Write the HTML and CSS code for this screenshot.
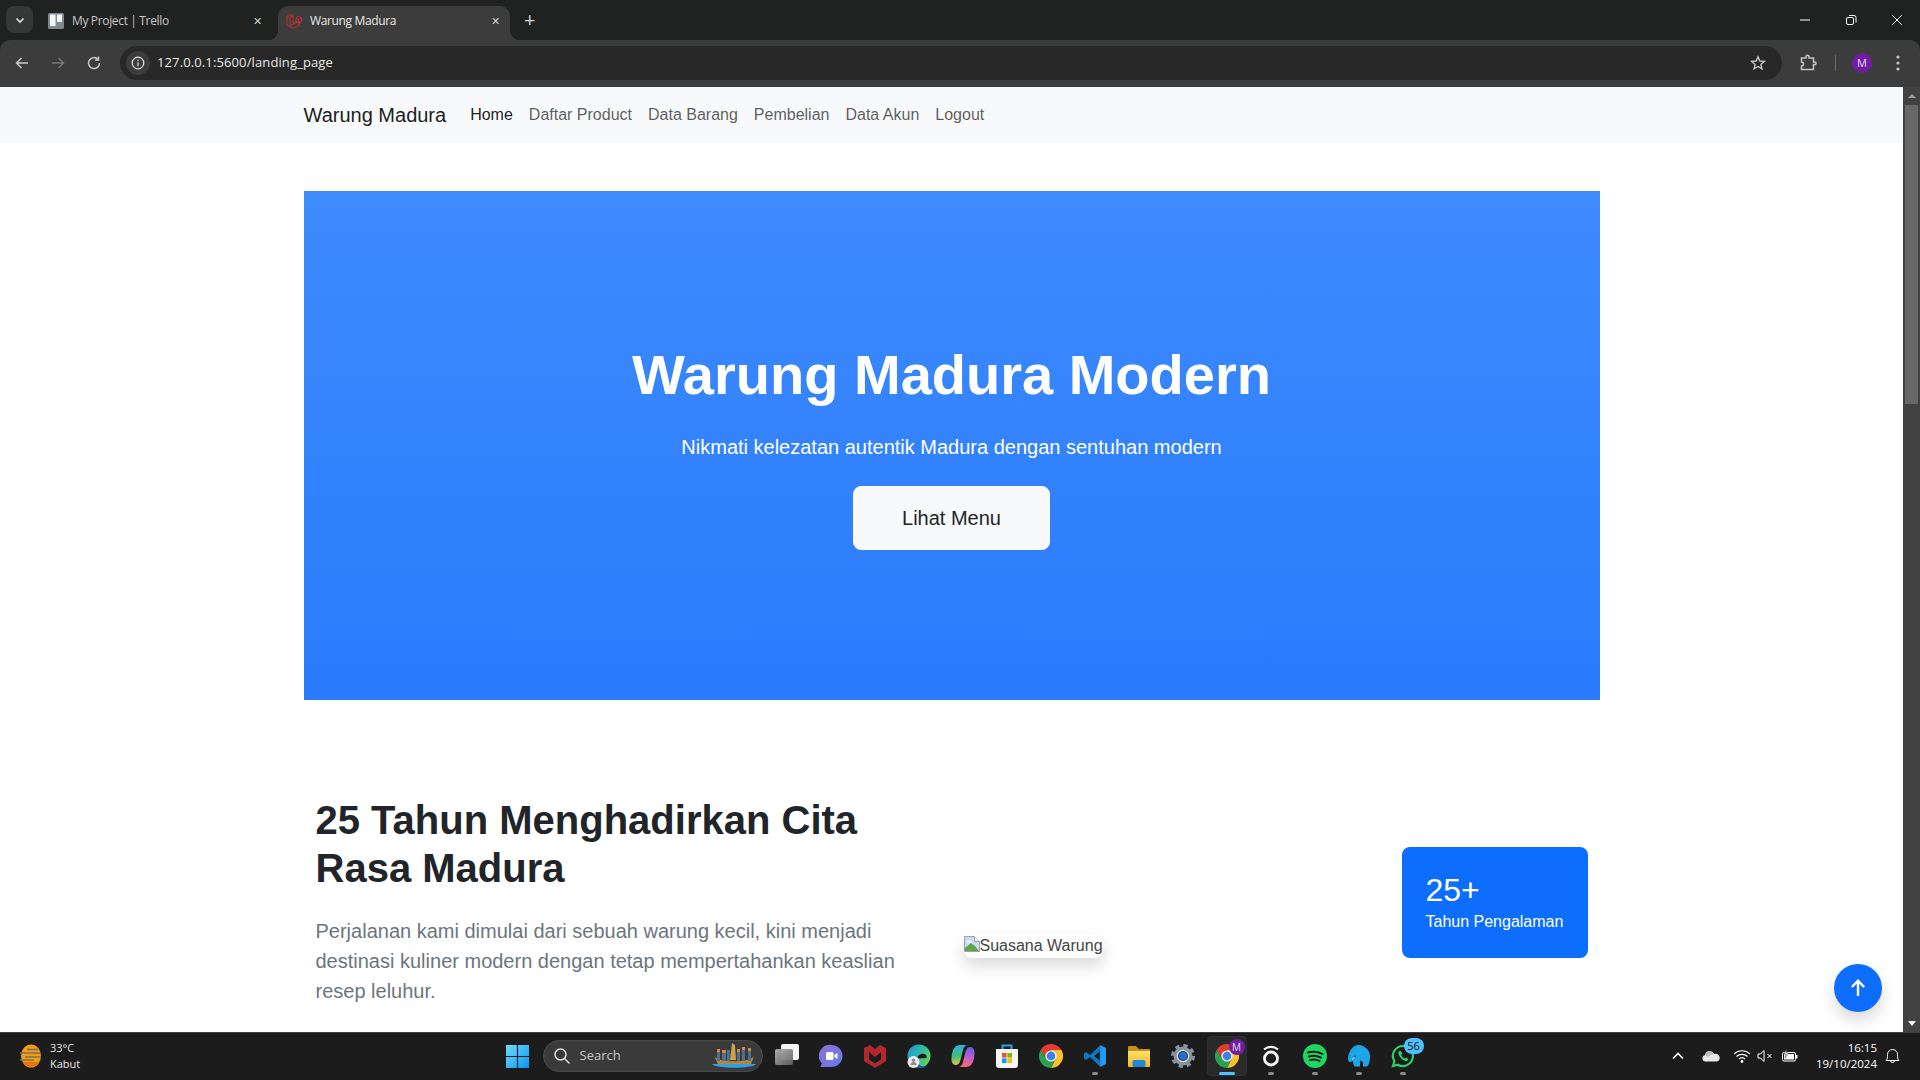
FILE: index.html
```html
<!DOCTYPE html>
<html lang="id">
<head>
    <meta charset="UTF-8">
    <meta name="viewport" content="width=device-width, initial-scale=1.0">
    <title>Warung Madura</title>
    <link rel="stylesheet" href="styles.css">
</head>
<body>

    <!-- shared gradients and the chrome logo -->
    <svg class="sprite" width="0" height="0">
        <defs>
            <linearGradient id="winGrad" x1="0" y1="0" x2="1" y2="1"><stop offset="0" stop-color="#6fdcff"/><stop offset="1" stop-color="#0a94f2"/></linearGradient>
            <linearGradient id="meetGrad" x1="0" y1="0" x2="1" y2="1"><stop offset="0" stop-color="#8f6fd6"/><stop offset="1" stop-color="#5f7fe8"/></linearGradient>
            <linearGradient id="edgeGrad" x1="0" y1="0" x2="1" y2="0.6"><stop offset="0" stop-color="#1b8fd8"/><stop offset="0.5" stop-color="#2bb5b0"/><stop offset="1" stop-color="#5ed35f"/></linearGradient>
            <linearGradient id="taskGrad" x1="0" y1="0" x2="1" y2="1"><stop offset="0" stop-color="#b0b0b0"/><stop offset="1" stop-color="#5e5e5e"/></linearGradient>
            <linearGradient id="copilotA" x1="0.3" y1="0" x2="0.4" y2="1"><stop offset="0" stop-color="#2fb0e8"/><stop offset="0.55" stop-color="#39c07a"/><stop offset="1" stop-color="#f3c33a"/></linearGradient>
            <linearGradient id="copilotB" x1="0.7" y1="0" x2="0.5" y2="1"><stop offset="0" stop-color="#5a63e0"/><stop offset="0.5" stop-color="#c25ad8"/><stop offset="1" stop-color="#f2705f"/></linearGradient>
            <linearGradient id="folderGrad" x1="0" y1="0" x2="0" y2="1"><stop offset="0" stop-color="#ffe06a"/><stop offset="1" stop-color="#f5b921"/></linearGradient>
        </defs>
        <symbol id="chrome" viewBox="0 0 24 24">
            <path d="M1.6 6A12 12 0 0 1 22.4 6H12L7 14z" fill="#e33b2e"/>
            <path d="M22.4 6A12 12 0 0 1 12 24l5-10-5-8z" fill="#fbc02d"/>
            <path d="M12 24A12 12 0 0 1 1.6 6L7 14h10z" fill="#2e9e4f"/>
            <circle cx="12" cy="12" r="5.6" fill="#fff"/>
            <circle cx="12" cy="12" r="4.4" fill="#3f7fe8"/>
        </symbol>
    </svg>

    <!-- browser chrome -->
    <header class="browser">
        <div class="tabstrip">
            <button class="tab-search">
                <svg width="12" height="12" viewBox="0 0 12 12"><path d="M2.5 4.5 6 8l3.5-3.5" fill="none" stroke="#e3e3e3" stroke-width="1.6"/></svg>
            </button>
            <div class="tab">
                <svg class="favicon" width="16" height="16" viewBox="0 0 16 16"><rect width="16" height="16" rx="1.5" fill="#7f8a90"/><rect x="2" y="1.5" width="5.5" height="11.5" fill="#f4f5f6"/><rect x="9" y="1.5" width="5" height="7.5" fill="#f4f5f6"/></svg>
                <span class="tab-title">My Project | Trello</span>
                <span class="tab-close">&#10005;</span>
            </div>
            <div class="tab tab-active">
                <svg class="favicon" width="16" height="16" viewBox="0 0 16 16" fill="none" stroke="#c9302c" stroke-width="0.9"><path d="M1 3 4 1.5 7 3 4 4.5zM1 3v9l6 3.5 6.500-3.500V8.500M4 4.500v8l3 3M7 3v7l3-1.500M4 12.500 7 11l6.500-2.500M10 5l3-1.500L15.500 5l-3 1.500zM10 5v3.500l2.500 1.500M12.500 6.500V10l3-1.500V5"/></svg>
                <span class="tab-title">Warung Madura</span>
                <span class="tab-close">&#10005;</span>
            </div>
            <span class="tab-new">+</span>
            <div class="window-controls">
                <svg width="14" height="14" viewBox="0 0 14 14"><path d="M2 7h10" stroke="#fff" stroke-width="1"/></svg>
                <svg width="14" height="14" viewBox="0 0 14 14" fill="none" stroke="#fff"><rect x="2.5" y="4.5" width="7" height="7" rx="1.5"/><path d="M5 2.5h5a2 2 0 0 1 2 2v5"/></svg>
                <svg width="14" height="14" viewBox="0 0 14 14"><path d="M2 2l10 10M12 2 2 12" stroke="#fff" stroke-width="1"/></svg>
            </div>
        </div>
        <div class="toolbar">
            <svg class="tool" width="16" height="16" viewBox="0 0 16 16" fill="none" stroke="#c7c7c7" stroke-width="1.5"><path d="M14 8H3M7.5 3l-5 5 5 5"/></svg>
            <svg class="tool" width="16" height="16" viewBox="0 0 16 16" fill="none" stroke="#757575" stroke-width="1.5"><path d="M2 8h11M8.5 3l5 5-5 5"/></svg>
            <svg class="tool" width="16" height="16" viewBox="0 0 16 16" fill="none" stroke="#c7c7c7" stroke-width="1.5"><path d="M13.500 8A5.500 5.500 0 1 1 11.500 3.800M12.500 1.500v3.500H9"/></svg>
            <div class="omnibox">
                <span class="site-info">
                    <svg width="14" height="14" viewBox="0 0 14 14" fill="none" stroke="#e3e3e3" stroke-width="1.2"><circle cx="7" cy="7" r="5.8"/><path d="M7 6.200v4M7 3.800v1.200"/></svg>
                </span>
                <span class="url">127.0.0.1:5600/landing_page</span>
                <svg class="star" width="16" height="16" viewBox="0 0 16 16" fill="none" stroke="#c7c7c7" stroke-width="1.4"><path d="M8 1.800 9.800 6l4.500.4-3.400 3 1 4.400L8 11.500l-3.900 2.300 1-4.400-3.400-3L6.200 6z"/></svg>
            </div>
            <svg class="extensions" width="18" height="18" viewBox="0 0 18 18" fill="none" stroke="#c7c7c7" stroke-width="1.5"><path d="M2.500 4H7V2.800a1.500 1.500 0 0 1 3 0V4h4.500v4h1.300a1.200 1.200 0 0 1 0 2.500h-1.300v5h-12V12a2 2 0 0 0 0-4z"/></svg>
            <span class="toolbar-sep"></span>
            <span class="avatar">M</span>
            <svg class="menu-dots" width="4" height="16" viewBox="0 0 4 16" fill="#c7c7c7"><circle cx="2" cy="2" r="1.6"/><circle cx="2" cy="8" r="1.6"/><circle cx="2" cy="14" r="1.6"/></svg>
        </div>
    </header>

    <div class="window">
        <main class="page">
            <nav class="navbar">
                <div class="container navbar-inner">
                    <a class="brand">Warung Madura</a>
                    <a class="nav-link nav-active">Home</a>
                    <a class="nav-link">Daftar Product</a>
                    <a class="nav-link">Data Barang</a>
                    <a class="nav-link">Pembelian</a>
                    <a class="nav-link">Data Akun</a>
                    <a class="nav-link">Logout</a>
                </div>
            </nav>

            <div class="container">
                <section class="hero">
                    <h1>Warung Madura Modern</h1>
                    <p class="lead">Nikmati kelezatan autentik Madura dengan sentuhan modern</p>
                    <a class="btn-light">Lihat Menu</a>
                </section>

                <section class="about">
                    <div class="about-copy">
                        <h2>25 Tahun Menghadirkan Cita Rasa Madura</h2>
                        <p>Perjalanan kami dimulai dari sebuah warung kecil, kini menjadi destinasi kuliner modern dengan tetap mempertahankan keaslian resep leluhur.</p>
                    </div>
                    <div class="about-media">
                        <span class="broken-img">
                            <svg width="16" height="16" viewBox="0 0 16 16"><path d="M.5.5h10l5 5v10H.5z" fill="#c9dcf5" stroke="#9aa3ad"/><path d="M1 15v-3l6-5 4 3 4 5z" fill="#5fa544"/><path d="M3 6.500a1.500 1.500 0 0 1 3-1 1.300 1.300 0 0 1 2 1.200z" fill="#fff"/><path d="M10.500.5v5h5" fill="#eef2f8" stroke="#9aa3ad"/></svg>Suasana Warung
                        </span>
                        <div class="exp-card">
                            <strong>25+</strong>
                            <span>Tahun Pengalaman</span>
                        </div>
                    </div>
                </section>
            </div>

            <a class="back-top">
                <svg width="20" height="20" viewBox="0 0 20 20" fill="none" stroke="#fff" stroke-width="2.4"><path d="M10 18V3M3.800 9 10 2.800 16.200 9"/></svg>
            </a>
        </main>
        <aside class="scrollbar">
            <span class="scroll-arrow scroll-up"></span>
            <span class="scroll-thumb"></span>
            <span class="scroll-arrow scroll-down"></span>
        </aside>
    </div>

    <!-- windows taskbar -->
    <footer class="taskbar">
        <div class="weather">
            <svg width="24" height="24" viewBox="0 0 24 24"><ellipse cx="12" cy="12" rx="10" ry="11.5" fill="#f59e0b"/><path d="M3.500 18a10 10 0 0 0 17 0z" fill="#e8710a"/><path d="M1 9h21M6 13h16M1 16h14M8 5.500h11" stroke="#77706a" stroke-width="1.5"/></svg>
            <div class="weather-text"><span>33°C</span><span>Kabut</span></div>
        </div>

        <div class="task-icons">
            <span class="task-item">
                <svg width="23" height="23" viewBox="0 0 24 24" fill="url(#winGrad)"><path d="M0 0h11.400v11.400H0zM12.600 0H24v11.400H12.600zM0 12.600h11.400V24H0zM12.600 12.600H24V24H12.600z"/></svg>
            </span>
            <label class="search-box">
                <svg width="18" height="18" viewBox="0 0 18 18" fill="none" stroke="#dcdcdc" stroke-width="1.5"><circle cx="7.5" cy="7.5" r="5.5"/><path d="m11.500 11.500 5 5"/></svg>
                <span>Search</span>
                <svg class="search-art" width="46" height="26" viewBox="0 0 46 26"><path d="M1 21h44c-3 5-40 5-44 0z" fill="#2f9fe0"/><path d="M3 13c4 7 36 7 40 0l-3 8H7z" fill="#b5863a"/><path d="M21 0l3 2 1 15h-6z" fill="#c9a24a"/><path d="M6 8h3v10H6zM11 9h4v9h-4zM16 7h3v11h-3zM26 8h3v10h-3zM31 6h3v12h-3zM37 7h3v11h-3z" fill="#4d6f92"/><path d="M6 6h3v3H6zM11 7h4v3h-4zM26 6h3v3h-3zM31 4h3v3h-3zM37 5h3v3h-3z" fill="#d58a42"/></svg>
            </label>
            <span class="task-item task-view">
                <svg width="24" height="24" viewBox="0 0 24 24"><rect x="6" y="0" width="18" height="16" rx="2" fill="#f4f4f4"/><rect x="0" y="5" width="18" height="16" rx="2" fill="url(#taskGrad)" opacity="0.95"/></svg>
            </span>
            <span class="task-item">
                <svg width="24" height="24" viewBox="0 0 24 24"><path d="M12.500 1a11 11 0 0 1 0 22H2.500c-.8 0-1.200-.8-.8-1.400L3 19.500A11 11 0 0 1 12.500 1z" fill="url(#meetGrad)"/><rect x="7" y="8" width="7.5" height="8" rx="1.5" fill="#fff"/><path d="m15.500 11 3-2v6l-3-2z" fill="#fff"/></svg>
            </span>
            <span class="task-item">
                <svg width="24" height="24" viewBox="0 0 24 24"><path d="M1 4l6-3 5 4 5-4 6 3v13l-11 7-11-7z" fill="#b3282d"/><path d="M6 8v7.500l6 4 6-4V8l-6 5z" fill="#1c1c1c"/></svg>
            </span>
            <span class="task-item">
                <svg width="24" height="24" viewBox="0 0 24 24"><circle cx="12" cy="12" r="11.5" fill="url(#edgeGrad)"/><path d="M10 14.500c.5-3 4-5.500 7.500-4.500 1.500.5 2.500 2 2 4z" fill="#1c1c1c"/><path d="M9.500 15c0 4 4 7.500 8 7.500 2 0 3.500-1 4.500-2.500-2 3.500-6 4.500-9.500 4-3.500-.5-5-3.500-3-9z" fill="#0f5ea8"/><circle cx="6.500" cy="18" r="6" fill="#ececec"/><circle cx="6.500" cy="16.300" r="1.700" fill="#8a8a8a"/><path d="M3.500 21a3 3 0 0 1 6 0z" fill="#8a8a8a"/></svg>
            </span>
            <span class="task-item">
                <svg width="24" height="24" viewBox="0 0 24 24"><path d="M9 1C4 1 2 5 1 10c-1 5-1 11 4 11 3 0 4-3 5-7l2-8c1-4 3-5 5-5z" fill="url(#copilotA)"/><path d="M15 23c5 0 7-4 8-9 1-5 1-11-4-11-3 0-4 3-5 7l-2 8c-1 4-3 5-5 5z" fill="url(#copilotB)"/></svg>
            </span>
            <span class="task-item">
                <svg width="24" height="24" viewBox="0 0 24 24"><path d="M7.500 7V1.500h9V7" fill="none" stroke="#21a3f1" stroke-width="2"/><path d="M1 5h22v16a3 3 0 0 1-3 3H4a3 3 0 0 1-3-3z" fill="#f5f5f5"/><rect x="7" y="9" width="4.6" height="4.6" fill="#f25022"/><rect x="12.400" y="9" width="4.6" height="4.6" fill="#7fba00"/><rect x="7" y="14.400" width="4.6" height="4.6" fill="#00a4ef"/><rect x="12.400" y="14.400" width="4.6" height="4.6" fill="#ffb900"/></svg>
            </span>
            <span class="task-item">
                <svg width="24" height="24" viewBox="0 0 24 24"><use href="#chrome"/></svg>
            </span>
            <span class="task-item has-dot">
                <svg width="24" height="24" viewBox="0 0 24 24"><path d="M17 1l6 3v16l-6 3z" fill="#1f9cf0"/><path d="M17.500 1 7 11 3 8 1 9.500v5L3 16l4-3 10.500 10v-6L11 12l6.500-5z" fill="#0a78c8"/></svg>
            </span>
            <span class="task-item">
                <svg width="24" height="24" viewBox="0 0 24 24"><path d="M1 3a1 1 0 0 1 1-1h7l3 3h10a1 1 0 0 1 1 1v3H1z" fill="#c98f1c"/><path d="M1 7h22v15a1 1 0 0 1-1 1H2a1 1 0 0 1-1-1z" fill="url(#folderGrad)"/><rect x="5.5" y="16" width="13" height="7" rx="1.5" fill="#1e88d8"/></svg>
            </span>
            <span class="task-item">
                <svg width="24" height="24" viewBox="0 0 24 24"><circle cx="12" cy="12" r="9.5" fill="#8792a0"/><circle cx="12" cy="12" r="10.5" fill="none" stroke="#8792a0" stroke-width="3" stroke-dasharray="4.3 3.95"/><circle cx="12" cy="12" r="6.2" fill="#e4e8ee"/><circle cx="12" cy="12" r="5" fill="#1e2a38"/><circle cx="12" cy="12" r="4.2" fill="#1f6fd0"/></svg>
            </span>
            <span class="task-item task-active">
                <svg width="24" height="24" viewBox="0 0 24 24"><use href="#chrome"/></svg>
                <span class="profile-badge">M</span>
            </span>
            <span class="task-item has-dot">
                <svg width="24" height="24" viewBox="0 0 24 24" fill="none" stroke="#f5f5f5" stroke-width="2.8"><circle cx="12" cy="14.500" r="6.5"/><path d="M5 5.500c4-3.500 10-3.500 14 0" stroke-width="2.2"/></svg>
            </span>
            <span class="task-item has-dot">
                <svg width="24" height="24" viewBox="0 0 24 24"><circle cx="12" cy="12" r="12" fill="#1ed760"/><path d="M5 8.500c5-1.500 10-1 14.500 1.500M6 12.500c4-1.200 8.500-.8 12 1.200M7 16c3-.8 7-.5 9.500 1" fill="none" stroke="#1c1c1c" stroke-width="2" stroke-linecap="round"/></svg>
            </span>
            <span class="task-item has-dot">
                <svg width="24" height="24" viewBox="0 0 24 24"><path d="M12 1c2 0 4 .5 5.500 2 3.500 2 5.500 5 5.500 9 0 5-1 9-3 10.500h-4V18l-3-1.500V22.500H7.500C6.500 21 6 19 6 17L3 18c-1.500 0-2-1.500-2-3C1 9 5 1 12 1z" fill="#1ea5e6"/><circle cx="8" cy="12.500" r="1" fill="#0b5f8a"/><path d="M5 15c1 0 2-.5 2.500-1.500" stroke="#e8f6fd" stroke-width="0.8" fill="none"/></svg>
            </span>
            <span class="task-item has-dot">
                <svg width="24" height="24" viewBox="0 0 24 24" fill="none"><path d="M12 2a10 10 0 1 1-5 18.700L2 22l1.400-4.800A10 10 0 0 1 12 2z" stroke="#25d366" stroke-width="2.2"/><path d="M8 7c-1 1-1 3 1 6s5 4.500 7 4l1.500-2-2.500-1.500-1.200 1c-1.500-.5-3-2-3.600-3.500l1-1.200L10 7z" fill="#25d366"/></svg>
                <span class="count-badge">56</span>
            </span>
        </div>

        <div class="tray">
            <svg class="tray-chevron" width="12" height="12" viewBox="0 0 12 12" fill="none" stroke="#fff" stroke-width="1.6"><path d="M1 8.500 6 3.500l5 5"/></svg>
            <svg class="tray-cloud" width="18" height="12" viewBox="0 0 18 12"><path d="M3.500 11.500a3.300 3.300 0 0 1-.5-6.500 5 5 0 0 1 9.300-1A3.800 3.800 0 0 1 15 11.500z" fill="#e8e8e8"/><path d="M3 5a5 5 0 0 1 9.300-1C9 4 7 6 6 7z" fill="#bdbdbd"/></svg>
            <svg class="tray-wifi" width="18" height="14" viewBox="0 0 18 14" fill="none" stroke="#fff" stroke-width="1.2"><path d="M1 5a11.500 11.500 0 0 1 16 0M3.500 7.500a8 8 0 0 1 11 0M6 10a4.500 4.500 0 0 1 6 0"/><circle cx="9" cy="12.5" r=".8" fill="#fff"/></svg>
            <svg class="tray-sound" width="16" height="14" viewBox="0 0 16 14" fill="none" stroke="#fff" stroke-width="1"><path d="M1 5v4h2.500L7 12.500v-11L3.500 5zM10.500 5l4 4M14.500 5l-4 4"/></svg>
            <svg class="tray-battery" width="16" height="14" viewBox="0 0 16 14"><rect x=".5" y="3.5" width="13" height="8.5" rx="1.5" fill="none" stroke="#fff"/><rect x="2" y="5" width="10" height="5.5" fill="#fff"/><rect x="14" y="6" width="1.5" height="3.5" fill="#fff"/><path d="M4.500 0 2 5h2L3 9l3.500-5h-2z" fill="#fff" stroke="#1c1c1c" stroke-width=".5"/></svg>
            <div class="clock"><span>16:15</span><span>19/10/2024</span></div>
            <svg class="tray-bell" width="15" height="16" viewBox="0 0 15 16" fill="none" stroke="#fff" stroke-width="1"><path d="M1 12.500c1.500-1.500 1.500-3 1.500-6a5 5 0 0 1 10 0c0 3 0 4.500 1.500 6zM5.500 12.500a2 2 0 0 0 4 0"/></svg>
        </div>
    </footer>

</body>
</html>
```

FILE: styles.css
```css
* { box-sizing: border-box; }

html, body { height: 100%; }

body {
    margin: 0;
    height: 1080px;
    overflow: hidden;
    display: flex;
    flex-direction: column;
    font-family: "Liberation Sans", Arial, sans-serif;
    font-size: 16px;
    line-height: 1.5;
    color: #212529;
    background: #fff;
}

.sprite { position: absolute; }

/* browser chrome */
.browser {
    flex: none;
    background: #202222;
    font-family: "Open Sans", "Noto Sans", sans-serif;
}

.tabstrip {
    height: 40px;
    display: flex;
    align-items: flex-end;
    padding-left: 6px;
}

.tab-search {
    align-self: flex-start;
    margin-top: 6px;
    width: 27px;
    height: 27px;
    padding: 0;
    border: 0;
    border-radius: 8px;
    background: #363838;
    display: flex;
    align-items: center;
    justify-content: center;
}

.tab {
    position: relative;
    width: 232px;
    height: 34px;
    padding: 0 10px 4px 8px;
    border-radius: 10px 10px 0 0;
    display: flex;
    align-items: center;
    font-size: 12px;
    color: #c7c7c7;
}

.tab:first-of-type { margin-left: 7px; }

.tab-active {
    margin-left: 6px;
    background: #3c3c3c;
    color: #e8e8e8;
}

/* the little flares at the foot of the active tab */
.tab-active::before,
.tab-active::after {
    content: "";
    position: absolute;
    bottom: 0;
    width: 10px;
    height: 10px;
}

.tab-active::before {
    left: -10px;
    background: radial-gradient(circle at 0 0, transparent 10px, #3c3c3c 10.5px);
}

.tab-active::after {
    right: -10px;
    background: radial-gradient(circle at 100% 0, transparent 10px, #3c3c3c 10.5px);
}

.favicon { flex: none; margin-right: 8px; }

.tab-title { flex: 1; letter-spacing: -.35px; }

.tab-close { font-size: 11px; color: #d0d0d0; }

.tab-new {
    align-self: flex-start;
    margin: 6px 0 0 14px;
    font-size: 20px;
    line-height: 28px;
    color: #d5d5d5;
}

.window-controls {
    align-self: flex-start;
    margin: 13px 16px 0 auto;
    display: flex;
    gap: 32px;
}

.toolbar {
    height: 47px;
    border-radius: 10px 10px 0 0;
    background: #3c3c3c;
    display: flex;
    align-items: center;
    padding: 0 20px 1px 14px;
}

.tool { flex: none; margin-right: 20px; }

.omnibox {
    flex: 1;
    height: 34px;
    margin-left: -2px;
    border-radius: 17px;
    background: #282828;
    display: flex;
    align-items: center;
    padding: 0 16px 0 6px;
}

.site-info {
    width: 24px;
    height: 24px;
    border-radius: 50%;
    background: #3c3c3c;
    display: flex;
    align-items: center;
    justify-content: center;
}

.url {
    flex: 1;
    margin-left: 7px;
    font-size: 13px;
    letter-spacing: .12px;
    color: #e8e8e8;
}

.extensions { flex: none; margin-left: 17px; }

.toolbar-sep {
    width: 1px;
    height: 16px;
    margin: 0 16px 0 18px;
    background: #6b6b6b;
}

.avatar {
    width: 20px;
    height: 20px;
    border-radius: 50%;
    background: #6f1ea0;
    color: #e6d8f0;
    font-size: 11px;
    line-height: 20px;
    text-align: center;
}

.menu-dots { flex: none; margin-left: 24px; }

/* page */
.window {
    flex: 1;
    min-height: 0;
    display: flex;
}

.page {
    flex: 1;
    min-width: 0;
    position: relative;
    overflow: hidden;
}

.scrollbar {
    flex: none;
    width: 17px;
    background: #424242;
    display: flex;
    flex-direction: column;
    align-items: center;
}

.scroll-thumb {
    width: 13px;
    height: 299px;
    background: #686868;
}

.scroll-arrow {
    width: 0;
    height: 0;
    border-left: 4px solid transparent;
    border-right: 4px solid transparent;
}

.scroll-up {
    margin: 7px 0;
    border-bottom: 4px solid #9a9a9a;
}

.scroll-down {
    margin-top: auto;
    margin-bottom: 6px;
    border-top: 5px solid #fff;
}

.container {
    width: 1320px;
    margin: 0 auto;
    padding: 0 12px;
}

.navbar {
    height: 56px;
    background: #f8f9fa;
}

.navbar-inner {
    height: 100%;
    display: flex;
    align-items: center;
}

.brand {
    margin-right: 16px;
    font-size: 20px;
    color: rgba(0, 0, 0, .9);
}

.nav-link {
    padding: 8px;
    color: rgba(0, 0, 0, .65);
}

.nav-active { color: rgba(0, 0, 0, .9); }

.hero {
    margin-top: 48px;
    padding: 150px 0;
    text-align: center;
    color: #fff;
    background: linear-gradient(#3d8bfd, #2a7bfd);
}

.hero h1 {
    margin: 0 0 24px;
    font-size: 56px;
    line-height: 1.2;
    font-weight: 700;
}

.lead {
    margin: 0 0 24px;
    font-size: 20px;
}

.btn-light {
    display: inline-block;
    padding: 16px 48px;
    border: 1px solid #f8f9fa;
    border-radius: 8px;
    background: #f8f9fa;
    color: #212529;
    font-size: 20px;
}

.about {
    display: flex;
    align-items: center;
    gap: 24px;
    padding: 96px 12px 0;
}

.about-copy {
    flex: 1;
    min-height: 300px;
}

.about-copy h2 {
    margin: 0 0 24px;
    font-size: 40px;
    line-height: 1.2;
    font-weight: 700;
}

.about-copy p {
    margin: 0;
    font-size: 20px;
    color: #6c757d;
}

.about-media {
    flex: 1;
    position: relative;
}

.broken-img {
    display: inline-block;
    border-radius: 8px;
    box-shadow: 0 8px 16px rgba(0, 0, 0, .15);
    color: #444;
    vertical-align: top;
}

.broken-img svg { vertical-align: -1px; }

.exp-card {
    position: absolute;
    right: 0;
    bottom: 0;
    width: 186px;
    height: 111px;
    padding: 24px 0 0 24px;
    border-radius: 8px;
    background: #0d6efd;
    color: #fff;
    display: flex;
    flex-direction: column;
}

.exp-card strong {
    font-size: 32px;
    font-weight: 400;
    line-height: 38px;
}

.exp-card span { margin-top: 1px; }

.back-top {
    position: absolute;
    right: 21px;
    bottom: 20px;
    width: 48px;
    height: 48px;
    border-radius: 50%;
    background: #0d6efd;
    box-shadow: 0 8px 16px rgba(0, 0, 0, .15);
    display: flex;
    align-items: center;
    justify-content: center;
}

/* taskbar */
.taskbar {
    flex: none;
    height: 48px;
    box-shadow: inset 0 1px #3f3f3f;
    background: #1c1c1c;
    color: #fff;
    display: grid;
    grid-template-columns: 1fr auto 1fr;
    align-items: center;
    font-family: "Open Sans", "Noto Sans", sans-serif;
    font-size: 12px;
}

.weather {
    display: flex;
    align-items: center;
    padding-left: 19px;
    gap: 7px;
}

.weather-text {
    display: flex;
    flex-direction: column;
    font-size: 11px;
    line-height: 16px;
    color: #e4e4e4;
}

.task-icons {
    display: flex;
    align-items: center;
}

.task-item {
    position: relative;
    width: 44px;
    height: 40px;
    display: flex;
    align-items: center;
    justify-content: center;
    border-radius: 4px;
}

.task-view { margin-left: 2px; }

.has-dot::after {
    content: "";
    position: absolute;
    left: 19px;
    bottom: 1px;
    width: 6px;
    height: 3px;
    border-radius: 2px;
    background: #8a8a8a;
}

.task-active {
    width: 40px;
    margin: 0 2px;
    border: 1px solid #303030;
    background: #2a2a2a;
}

.task-active::after {
    content: "";
    position: absolute;
    left: 11px;
    bottom: 0;
    width: 16px;
    height: 3px;
    border-radius: 2px;
    background: #4cc2ff;
}

.profile-badge,
.count-badge {
    position: absolute;
    text-align: center;
    font-size: 10px;
}

.profile-badge {
    right: 1px;
    top: 2px;
    width: 16px;
    height: 16px;
    line-height: 16px;
    border-radius: 50%;
    background: #6f1ea0;
    color: #e6d8f0;
}

.count-badge {
    right: 1px;
    top: 2px;
    width: 20px;
    height: 16px;
    line-height: 16px;
    border-radius: 8px;
    background: #4cc2ff;
    color: #111;
    font-size: 11px;
}

.search-box {
    width: 220px;
    height: 32px;
    margin-left: 3px;
    padding: 0 5px 0 9px;
    border-radius: 16px;
    border: 1px solid #4a4a4a;
    background: #3a3a3a;
    display: flex;
    align-items: center;
    gap: 9px;
    font-size: 13px;
    color: #c8c8c8;
}

.search-art { margin-left: auto; }

.tray {
    justify-self: end;
    display: flex;
    align-items: center;
}

.tray-chevron { margin-right: 18px; }
.tray-cloud { margin-right: 13px; }
.tray-wifi { margin-right: 6px; }
.tray-sound { margin-right: 9px; }
.tray-battery { margin-right: 18px; }

.clock {
    display: flex;
    flex-direction: column;
    align-items: flex-end;
    font-size: 11.5px;
    line-height: 16px;
}

.tray-bell { margin: 0 20px 0 8px; }
```
